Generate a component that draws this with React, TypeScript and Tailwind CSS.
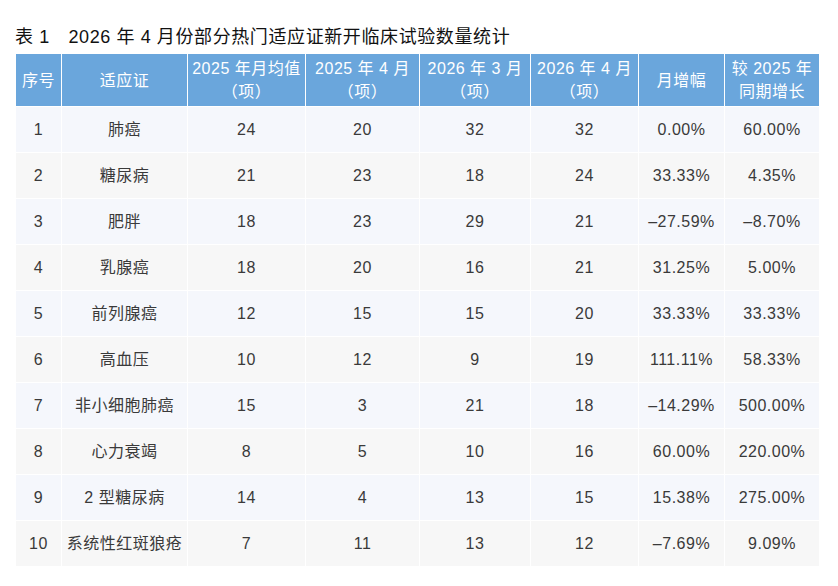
const cols = [46, 126, 118, 114, 111, 108, 86, 95];

const headers: string[][] = [
  ["序号"],
  ["适应证"],
  ["2025 年月均值", "（项）"],
  ["2025 年 4 月", "（项）"],
  ["2026 年 3 月", "（项）"],
  ["2026 年 4 月", "（项）"],
  ["月增幅"],
  ["较 2025 年", "同期增长"],
];

const rows: string[][] = [
  ["1", "肺癌", "24", "20", "32", "32", "0.00%", "60.00%"],
  ["2", "糖尿病", "21", "23", "18", "24", "33.33%", "4.35%"],
  ["3", "肥胖", "18", "23", "29", "21", "–27.59%", "–8.70%"],
  ["4", "乳腺癌", "18", "20", "16", "21", "31.25%", "5.00%"],
  ["5", "前列腺癌", "12", "15", "15", "20", "33.33%", "33.33%"],
  ["6", "高血压", "10", "12", "9", "19", "111.11%", "58.33%"],
  ["7", "非小细胞肺癌", "15", "3", "21", "18", "–14.29%", "500.00%"],
  ["8", "心力衰竭", "8", "5", "10", "16", "60.00%", "220.00%"],
  ["9", "2 型糖尿病", "14", "4", "13", "15", "15.38%", "275.00%"],
  ["10", "系统性红斑狼疮", "7", "11", "13", "12", "–7.69%", "9.09%"],
];

export default function App() {
  return (
    <div className="h-[586px] w-[838px] bg-white px-[15px] pt-[26px] font-['Helvetica','Liberation_Sans','Noto_Sans_CJK_SC',sans-serif]">
      <h1 className="mb-[5px] h-[22px] text-[18px] leading-[22px] font-normal tracking-[0.6px] text-[#111111]">
        表 1　2026 年 4 月份部分热门适应证新开临床试验数量统计
      </h1>
      <table className="table-fixed border-collapse text-[16px] tracking-[0.5px]">
        <colgroup>
          {cols.map((w, i) => (
            <col key={i} style={{ width: w }} />
          ))}
        </colgroup>
        <thead>
          <tr className="h-[53px] bg-[#6aa6dc] text-white">
            {headers.map((h, i) => (
              <th
                key={i}
                className="border-[1.5px] border-white px-0 text-center leading-[23px] font-normal"
              >
                {h.map((line, j) => (
                  <div key={j}>{line}</div>
                ))}
              </th>
            ))}
          </tr>
        </thead>
        <tbody>
          {rows.map((r, i) => (
            <tr
              key={i}
              className={
                i % 2 === 0 ? "h-[46px] bg-[#f5f7fc]" : "h-[46px] bg-[#f7f7f7]"
              }
            >
              {r.map((cell, j) => (
                <td
                  key={j}
                  className="border-[1.5px] border-white text-center whitespace-nowrap text-[#3a3a3a]"
                >
                  {cell}
                </td>
              ))}
            </tr>
          ))}
        </tbody>
      </table>
    </div>
  );
}
